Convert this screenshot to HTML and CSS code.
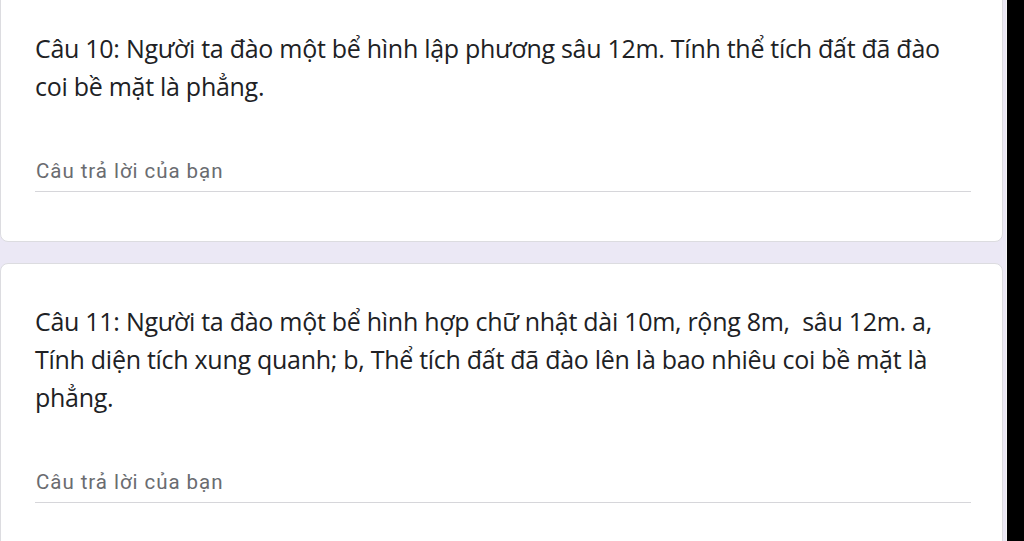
FILE: index.html
```html
<!DOCTYPE html>
<html lang="vi">
<head>
<meta charset="utf-8">
<title>Form</title>
<link rel="stylesheet" href="styles.css">
</head>
<body>
<div class="page">
  <section class="card card-first">
    <div class="question">Câu 10: Người ta đào một bể hình lập phương sâu 12m. Tính thể tích đất đã đào coi bề mặt là phẳng.</div>
    <div class="answer"><span class="placeholder">Câu trả lời của bạn</span></div>
  </section>
  <section class="card card-second">
    <div class="question">Câu 11: Người ta đào một bể hình hợp chữ nhật dài 10m, rộng 8m,&nbsp; sâu 12m. a, Tính diện tích xung quanh; b, Thể tích đất đã đào lên là bao nhiêu coi bề mặt là phẳng.</div>
    <div class="answer"><span class="placeholder">Câu trả lời của bạn</span></div>
  </section>
</div>
</body>
</html>
```

FILE: styles.css
```css
html, body {
  margin: 0;
  padding: 0;
}
body {
  background: #000;
  width: 1024px;
  height: 541px;
  overflow: hidden;
}
.page {
  width: 1006px;
  height: 541px;
  background: #ebe8f5;
  overflow: hidden;
  display: flex;
  flex-direction: column;
  gap: 21px;
  border-right: 1px solid #f4f4f4;
}
.card {
  width: 1003px;
  box-sizing: border-box;
  background: #fff;
  border: 1px solid #dcdce0;
  border-radius: 8px;
  padding: 0 31px 0 34px;
  flex-shrink: 0;
}
.card-first {
  margin-top: -10px;
  padding-top: 38px;
  padding-bottom: 49px;
}
.card-second {
  padding-top: 38px;
  padding-bottom: 120px;
}
.question {
  font-family: "Open Sans", "Noto Sans", sans-serif;
  font-size: 25px;
  line-height: 38px;
  color: #202124;
  letter-spacing: -0.28px;
}
.answer {
  margin-top: 54px;
  padding-bottom: 8px;
  border-bottom: 1px solid #d6d6da;
}
.placeholder {
  display: block;
  padding-left: 1px;
  font-family: Roboto, "Liberation Sans", sans-serif;
  font-size: 20.5px;
  line-height: 24px;
  letter-spacing: 0.95px;
  color: #6a6c70;
}
```
